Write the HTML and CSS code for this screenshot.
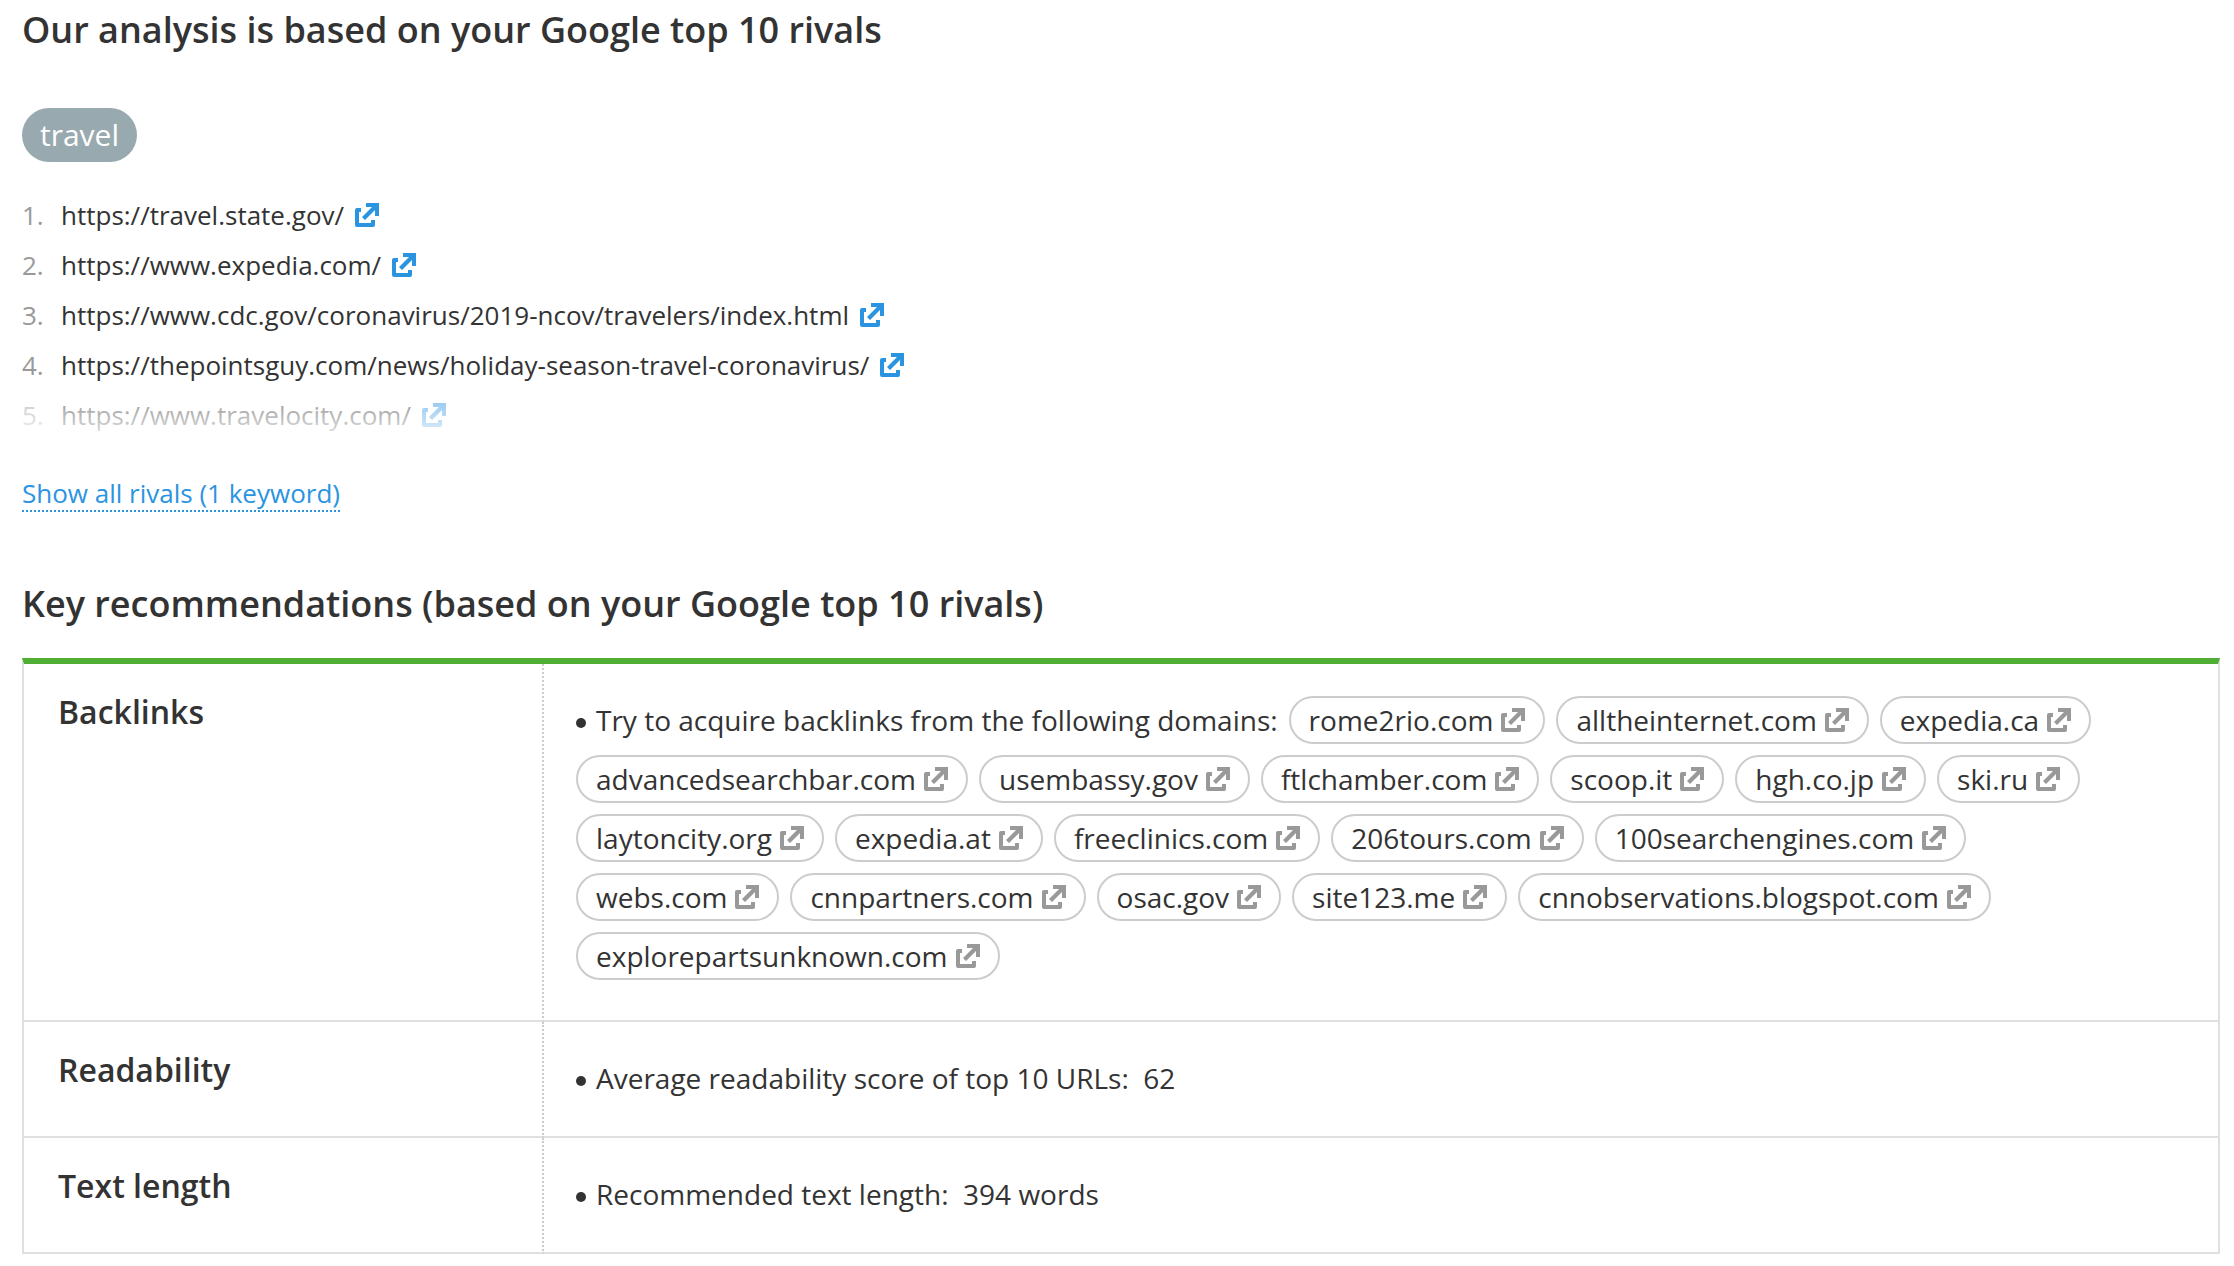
FILE: index.html
```html
<!DOCTYPE html>
<html lang="en">
<head>
    <meta charset="UTF-8">
    <meta name="viewport" content="width=device-width, initial-scale=1.0">
    <title>SEO Ideas</title>
    <link rel="stylesheet" href="styles.css">
</head>
<body>
    <svg class="sprite" aria-hidden="true">
        <symbol id="external" viewBox="0 0 24 24">
            <path d="M6 5H2a2 2 0 0 0-2 2v15a2 2 0 0 0 2 2h16a2 2 0 0 0 2-2v-5h-4v3H4V9h2z"/>
            <path d="M11 0h13v13h-4V7L10 17l-3-3L17 4h-6z"/>
        </symbol>
    </svg>

    <main class="page">
        <section class="rivals">
            <h2 class="title">Our analysis is based on your Google top 10 rivals</h2>
            <span class="keyword">travel</span>
            <ol class="rivals-list">
                <li><span class="num">1.</span><a href="#">https://travel.state.gov/<svg class="icon"><use href="#external"/></svg></a></li>
                <li><span class="num">2.</span><a href="#">https://www.expedia.com/<svg class="icon"><use href="#external"/></svg></a></li>
                <li><span class="num">3.</span><a href="#">https://www.cdc.gov/coronavirus/2019-ncov/travelers/index.html<svg class="icon"><use href="#external"/></svg></a></li>
                <li><span class="num">4.</span><a href="#">https://thepointsguy.com/news/holiday-season-travel-coronavirus/<svg class="icon"><use href="#external"/></svg></a></li>
                <li><span class="num">5.</span><a href="#">https://www.travelocity.com/<svg class="icon"><use href="#external"/></svg></a></li>
            </ol>
            <button type="button" class="show-all">Show all rivals (1 keyword)</button>
        </section>

        <section class="recommendations">
            <h2 class="title">Key recommendations (based on your Google top 10 rivals)</h2>
            <table class="ideas">
                <tbody>
                    <tr>
                        <th scope="row">Backlinks</th>
                        <td>
                            <div class="idea domains">
                                <span class="bullet">Try to acquire backlinks from the following domains:</span>
                                <a class="pill" href="#">rome2rio.com<svg class="icon"><use href="#external"/></svg></a>
                                <a class="pill" href="#">alltheinternet.com<svg class="icon"><use href="#external"/></svg></a>
                                <a class="pill" href="#">expedia.ca<svg class="icon"><use href="#external"/></svg></a>
                                <a class="pill" href="#">advancedsearchbar.com<svg class="icon"><use href="#external"/></svg></a>
                                <a class="pill" href="#">usembassy.gov<svg class="icon"><use href="#external"/></svg></a>
                                <a class="pill" href="#">ftlchamber.com<svg class="icon"><use href="#external"/></svg></a>
                                <a class="pill" href="#">scoop.it<svg class="icon"><use href="#external"/></svg></a>
                                <a class="pill" href="#">hgh.co.jp<svg class="icon"><use href="#external"/></svg></a>
                                <a class="pill" href="#">ski.ru<svg class="icon"><use href="#external"/></svg></a>
                                <a class="pill" href="#">laytoncity.org<svg class="icon"><use href="#external"/></svg></a>
                                <a class="pill" href="#">expedia.at<svg class="icon"><use href="#external"/></svg></a>
                                <a class="pill" href="#">freeclinics.com<svg class="icon"><use href="#external"/></svg></a>
                                <a class="pill" href="#">206tours.com<svg class="icon"><use href="#external"/></svg></a>
                                <a class="pill" href="#">100searchengines.com<svg class="icon"><use href="#external"/></svg></a>
                                <a class="pill" href="#">webs.com<svg class="icon"><use href="#external"/></svg></a>
                                <a class="pill" href="#">cnnpartners.com<svg class="icon"><use href="#external"/></svg></a>
                                <a class="pill" href="#">osac.gov<svg class="icon"><use href="#external"/></svg></a>
                                <a class="pill" href="#">site123.me<svg class="icon"><use href="#external"/></svg></a>
                                <a class="pill" href="#">cnnobservations.blogspot.com<svg class="icon"><use href="#external"/></svg></a>
                                <a class="pill" href="#">explorepartsunknown.com<svg class="icon"><use href="#external"/></svg></a>
                            </div>
                        </td>
                    </tr>
                    <tr>
                        <th scope="row">Readability</th>
                        <td>
                            <div class="idea"><span class="bullet">Average readability score of top 10 URLs:&nbsp; 62</span></div>
                        </td>
                    </tr>
                    <tr>
                        <th scope="row">Text length</th>
                        <td>
                            <div class="idea"><span class="bullet">Recommended text length:&nbsp; 394 words</span></div>
                        </td>
                    </tr>
                </tbody>
            </table>
        </section>
    </main>
</body>
</html>
```
FILE: styles.css
```css
:root {
    --text-color: #333;
    --muted-color: #999;
    --link-color: #2b94e1;
    --green: #4fae33;
    --line: #e0e0e0;
    --pill-border: #ccc;
}

* {
    box-sizing: border-box;
    margin: 0;
    padding: 0;
}

body {
    font-family: "Open Sans", "Noto Sans", sans-serif;
    color: var(--text-color);
    background-color: #fff;
}

a {
    color: inherit;
    text-decoration: none;
}

.sprite {
    display: none;
}

.icon {
    width: 24px;
    height: 24px;
    flex: none;
    fill: currentColor;
}

.page {
    padding: 6px 14px 0 22px;
}

.title {
    font-size: 36px;
    line-height: 48px;
    font-weight: 600;
}

.keyword {
    display: inline-block;
    margin-top: 54px;
    padding: 0 18px;
    border-radius: 27px;
    font-size: 30px;
    line-height: 54px;
    color: #fff;
    background-color: #98a9af;
}

.rivals-list {
    position: relative;
    margin-top: 28px;
    list-style: none;
    font-size: 26px;
    line-height: 50px;
}

/* fades out the last visible rival */
.rivals-list::after {
    content: "";
    position: absolute;
    left: 0;
    right: 0;
    bottom: 0;
    height: 50px;
    background: linear-gradient(rgba(255, 255, 255, 0.4), rgba(255, 255, 255, 0.9));
}

.rivals-list li {
    display: flex;
}

.rivals-list a {
    display: flex;
    align-items: center;
    gap: 11px;
}

.rivals-list .icon {
    color: var(--link-color);
}

.num {
    width: 39px;
    color: var(--muted-color);
}

.show-all {
    margin-top: 36px;
    border: none;
    border-bottom: 2px dotted var(--link-color);
    font: inherit;
    font-size: 26px;
    line-height: 34px;
    color: var(--link-color);
    background: none;
    cursor: pointer;
}

.recommendations {
    margin-top: 68px;
}

.ideas {
    width: 100%;
    margin-top: 30px;
    border-collapse: separate;
    border-spacing: 0;
    border: 2px solid var(--line);
    border-top: 6px solid var(--green);
    border-bottom: none;
}

.ideas th,
.ideas td {
    border-bottom: 2px solid var(--line);
    vertical-align: top;
}

.ideas th {
    width: 520px;
    padding: 24px 34px;
    border-right: 2px dotted var(--pill-border);
    font-size: 32px;
    line-height: 48px;
    font-weight: 600;
    text-align: left;
}

.ideas td {
    padding: 32px 60px 34px 32px;
}

.idea {
    display: flex;
    flex-wrap: wrap;
    gap: 11px;
    font-size: 28px;
    line-height: 48px;
}

.domains {
    padding-bottom: 6px;
}

.bullet::before {
    content: "";
    display: inline-block;
    width: 10px;
    height: 10px;
    margin-right: 10px;
    border-radius: 50%;
    vertical-align: 3px;
    background-color: var(--text-color);
}

.pill {
    display: flex;
    align-items: center;
    gap: 8px;
    padding: 0 18px;
    border: 2px solid var(--pill-border);
    border-radius: 24px;
    line-height: 44px;
}

.pill .icon {
    color: var(--muted-color);
}
```
